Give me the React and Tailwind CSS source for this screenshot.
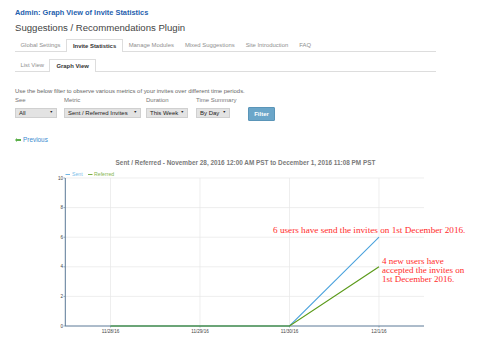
import React from "react";

const tabs = ["Global Settings", "Invite Statistics", "Manage Modules", "Mixed Suggestions", "Site Introduction", "FAQ"];

function Tabs({ items, active, className }) {
  return (
    <div className={"flex items-end border-b border-[#dddddd] " + className}>
      {items.map((t) =>
        t === active ? (
          <div
            key={t}
            className="-mb-px h-[13px] flex items-center px-[6px] border border-b-0 border-[#dddddd] bg-white text-[5.9px] font-bold text-[#333]"
          >
            {t}
          </div>
        ) : (
          <div key={t} className="h-full flex items-center px-[5.5px] text-[5.9px] text-[#8f8f8f]">
            {t}
          </div>
        )
      )}
    </div>
  );
}

function Field({ label, value, width }) {
  return (
    <div className="flex flex-col">
      <div className="h-[9px] text-[6px] text-[#777] leading-[9px] whitespace-nowrap">{label}</div>
      <div
        className="mt-[3px] h-[10px] flex items-center justify-between px-[3px] bg-[#e3e3e3] border border-[#d0d0d0] text-[6px] text-[#222]"
        style={{ width }}
      >
        <span>{value}</span>
        <span className="text-[3.6px]">▼</span>
      </div>
    </div>
  );
}

function Chart() {
  const y0 = 327 - 150;
  const step = 14.8;
  const yAt = (v) => y0 - v * step;
  const xs = [110.5, 200, 289.5, 379];
  const labels = ["11/28/16", "11/29/16", "11/30/16", "12/1/16"];
  const sans = "Liberation Sans, Arial, sans-serif";
  return (
    <svg width="480" height="200" viewBox="0 0 480 200" className="block">
      <text x="245.5" y="15.5" textAnchor="middle" fontSize="6.4" fontWeight="bold" fill="#7a7a7a" fontFamily={sans}>
        Sent / Referred - November 28, 2016 12:00 AM PST to December 1, 2016 11:08 PM PST
      </text>
      {/* legend */}
      <line x1="65.5" y1="25.5" x2="70" y2="25.5" stroke="#4ca3dd" strokeWidth="0.8" />
      <text x="72" y="27.3" fontSize="5.2" fill="#7cc0ea" fontFamily={sans}>Sent</text>
      <line x1="88" y1="25.5" x2="92.5" y2="25.5" stroke="#5b9a1a" strokeWidth="0.8" />
      <text x="94" y="27.3" fontSize="5.2" fill="#86b650" fontFamily={sans}>Referred</text>
      {/* grid */}
      {[10, 8, 6, 4, 2].map((v) => (
        <line key={v} x1="65" x2="424" y1={yAt(v)} y2={yAt(v)} stroke="#e6e6e6" strokeWidth="0.7" />
      ))}
      {xs.map((x) => (
        <line key={x} x1={x} x2={x} y1={yAt(10)} y2={y0} stroke="#e6e6e6" strokeWidth="0.7" />
      ))}
      {/* axes */}
      <line x1="65.3" y1={yAt(10)} x2="65.3" y2={y0} stroke="#5a7896" strokeWidth="1" />
      <line x1="65" y1={y0} x2="424" y2={y0} stroke="#5a7896" strokeWidth="1" />
      {[10, 8, 6, 4, 2, 0].map((v) => (
        <g key={v}>
          <line x1="63.5" x2="65" y1={yAt(v)} y2={yAt(v)} stroke="#5a7896" strokeWidth="0.6" />
          <text x="63" y={yAt(v) + 1.6} textAnchor="end" fontSize="4.6" fill="#444" fontFamily={sans}>{v}</text>
        </g>
      ))}
      {xs.map((x, i) => (
        <g key={i}>
          <line x1={x} x2={x} y1={y0} y2={y0 + 1.5} stroke="#5a7896" strokeWidth="0.6" />
          <text x={x} y={y0 + 7} textAnchor="middle" fontSize="4.6" fill="#444" fontFamily={sans}>{labels[i]}</text>
        </g>
      ))}
      {/* series */}
      <polyline points={`${xs[0]},${y0} ${xs[1]},${y0} ${xs[2]},${y0} ${xs[3]},${yAt(6)}`} fill="none" stroke="#4ca3dd" strokeWidth="1.1" />
      <polyline points={`${xs[0]},${y0} ${xs[1]},${y0} ${xs[2]},${y0} ${xs[3]},${yAt(4)}`} fill="none" stroke="#5b9a1a" strokeWidth="1.2" />
      {/* notes */}
      <g fontFamily="Liberation Serif, Times New Roman, serif" fill="#ff2b2b">
        <text x="273" y="83.5" fontSize="9.2">6 users have send the invites on 1st December 2016.</text>
        <text x="382" y="114.5" fontSize="9">4 new users have</text>
        <text x="382" y="123.5" fontSize="9">accepted the invites on</text>
        <text x="382" y="132.5" fontSize="9">1st December 2016.</text>
      </g>
    </svg>
  );
}

export default function App() {
  return (
    <div className="w-[480px] h-[360px] overflow-hidden bg-white font-['Liberation_Sans',Arial,sans-serif]">
      <div className="pl-[15px] pt-[8px]">
        <div className="h-[10px] text-[7.4px] font-bold text-[#1f5fae] leading-[10px]">
          Admin: Graph View of Invite Statistics
        </div>
        <div className="mt-[4px] h-[12px] text-[9.6px] text-[#444] leading-[12px]">
          Suggestions / Recommendations Plugin
        </div>
        <Tabs items={tabs} active="Invite Statistics" className="mt-[6px] h-[12px] w-[421px]" />
        <Tabs items={["List View", "Graph View"]} active="Graph View" className="mt-[8px] h-[12px] w-[421px]" />
        <div className="mt-[15px] h-[8px] text-[5.9px] text-[#666] leading-[8px] whitespace-nowrap">
          Use the below filter to observe various metrics of your invites over different time periods.
        </div>
        <div className="mt-[1px] flex items-end">
          <Field label="See" value="All" width={42} />
          <div className="ml-[7px]">
            <Field label="Metric" value="Sent / Referred Invites" width={77} />
          </div>
          <div className="ml-[5px]">
            <Field label="Duration" value="This Week" width={42} />
          </div>
          <div className="ml-[8px] w-[34px]">
            <Field label="Time Summary" value="By Day" width={34} />
          </div>
          <div className="ml-[18px] mb-[-3px] w-[27px] h-[14px] flex items-center justify-center bg-[#6ba6c9] border border-[#5a95b8] rounded-[1px] text-[6px] font-bold text-white">
            Filter
          </div>
        </div>
        <div className="mt-[18px] h-[8px] flex items-center gap-[2px]">
          <svg width="6" height="4" viewBox="0 0 6 4">
            <path d="M0 2 L2 0 L2 1 L6 1 L6 3 L2 3 L2 4 Z" fill="#5cb04a" />
          </svg>
          <span className="text-[6.4px] text-[#3b8bd0]">Previous</span>
        </div>
      </div>
      <div className="mt-[5px]">
        <Chart />
      </div>
    </div>
  );
}
